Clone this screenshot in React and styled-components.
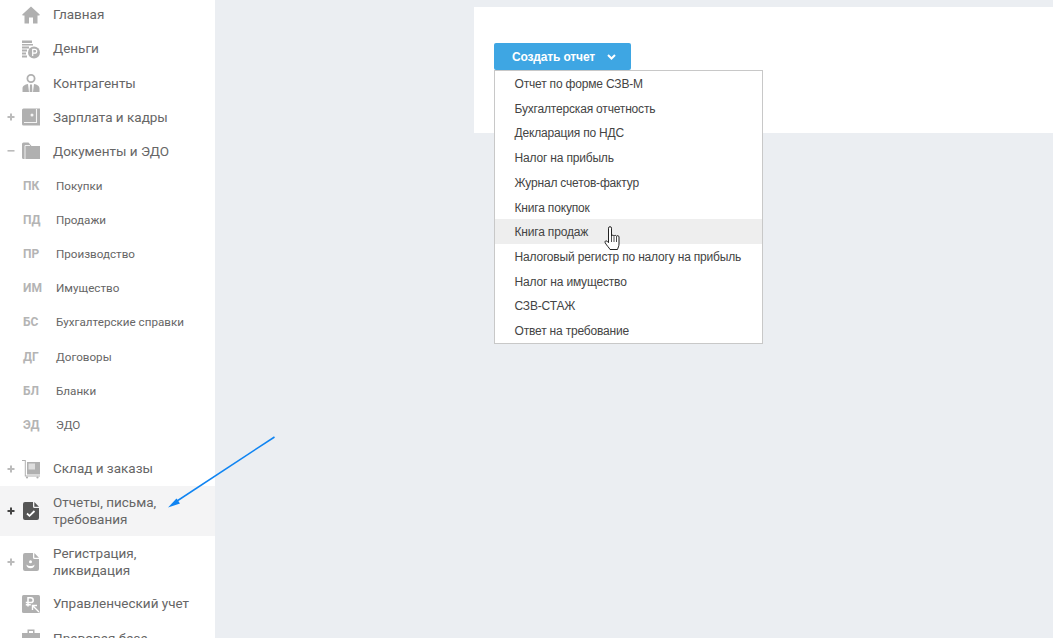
import React from "react";
import styled, { createGlobalStyle } from "styled-components";

const GlobalStyle = createGlobalStyle`
  html, body {
    margin: 0;
    height: 100%;
    overflow: hidden;
    background: #ebeef2;
  }
  #root {
    height: 100%;
  }
`;

const Page = styled.div`
  display: flex;
  position: relative;
  height: 638px;
  overflow: hidden;
  background: #ebeef2;
`;
const Sidebar = styled.nav`
  flex: 0 0 215px;
  background: #fff;
  overflow: hidden;
`;
const MenuList = styled.div`
  margin-top: -2.4px;
`;
const Row = styled.div`
  display: flex;
  align-items: center;
  height: ${(props) => (props.$tall ? "50.5px" : "34.2px")};
  background: ${(props) => (props.$active ? "#f4f4f5" : "transparent")};
  font-family: Roboto, "Liberation Sans", sans-serif;
  font-size: 13.5px;
  line-height: 17px;
  color: #666;
`;
const Toggle = styled.span`
  flex: 0 0 22px;
  padding-left: 7px;
  box-sizing: border-box;
  display: flex;
  color: ${(props) => (props.$active ? "#444" : "#bbb")};
`;
const IconBox = styled.span`
  flex: 0 0 18px;
  height: 18px;
  margin-right: 13px;
  display: flex;
  justify-content: center;
  color: ${(props) => (props.$active ? "#555" : "#b0b0b0")};
`;
const Label = styled.span`
  max-width: ${(props) => (props.$wrap ? "125px" : "none")};
`;
const SubList = styled.div`
  padding-bottom: 9.6px;
`;
const SubRow = styled.div`
  display: flex;
  align-items: center;
  height: 34.2px;
  padding-left: 23px;
  font-family: Roboto, "Liberation Sans", sans-serif;
  font-size: 11.65px;
  color: #666;
`;
const SubCode = styled.span`
  flex: 0 0 33px;
  font-size: 12px;
  font-weight: 700;
  color: #b4b4b4;
`;
const Content = styled.main`
  flex: 1;
  padding: 7px 0 0 259px;
`;
const Card = styled.section`
  height: 126px;
  box-sizing: border-box;
  padding: 36px 20px;
  background: #fff;
`;
const Dropdown = styled.div`
  position: relative;
  width: 137px;
`;
const CreateButton = styled.button`
  display: flex;
  align-items: center;
  width: 137px;
  height: 27px;
  padding: 0 0 0 18px;
  border: 0;
  border-radius: 2px;
  background: #3ea6e3;
  color: #fff;
  font-family: "Liberation Sans", Arial, sans-serif;
  font-size: 12px;
  font-weight: 700;
  letter-spacing: -0.15px;
`;
const ButtonChevron = styled.span`
  display: flex;
  margin-left: 12px;
`;
const Menu = styled.ul`
  position: absolute;
  top: 27px;
  left: 0;
  width: 269px;
  box-sizing: border-box;
  margin: 0;
  padding: 0;
  list-style: none;
  background: #fff;
  border: 1px solid #c8c8c8;
`;
const MenuItem = styled.li`
  height: 24.72px;
  line-height: 26.4px;
  padding-left: 19.5px;
  font-family: "Liberation Sans", Arial, sans-serif;
  font-size: 12px;
  letter-spacing: -0.18px;
  color: #444;
  white-space: nowrap;
  background: ${(props) => (props.$hover ? "#eeeeee" : "transparent")};
`;
const Overlay = styled.svg`
  position: absolute;
  pointer-events: none;
`;
const Arrow = styled(Overlay)`
  left: 160px;
  top: 430px;
`;
const HandCursor = styled(Overlay)`
  left: 604px;
  top: 226px;
`;

const HomeIcon = () => (
  <svg width="18" height="18" viewBox="0 0 18 18" fill="currentColor">
    <path d="M9 0.500 L0.300 8.500 Q0 9.500 1 9.500 L2.500 9.500 L2.500 17.500 L7 17.500 L7 11.500 L11 11.500 L11 17.500 L15.500 17.500 L15.500 9.500 L17 9.500 Q18 9.500 17.700 8.500 Z" />
  </svg>
);
const MoneyIcon = () => (
  <svg width="18" height="19" viewBox="0 0 18 19" fill="currentColor">
    <path d="M0 0.500h10v2.500H0zM0 4h11v1.500H0zM0 6.500h7v2H0zM0 9.500h5v2H0zM0 12.500h4v2H0zM0 15.500h5v2H0z" />
    <circle cx="12" cy="12.500" r="6" />
    <path d="M10.700 16V9.300h2.100a1.900 1.900 0 0 1 0 3.900h-2.100" fill="none" stroke="#fff" strokeWidth="1.200" />
  </svg>
);
const PersonIcon = () => (
  <svg width="18" height="18" viewBox="0 0 18 18" fill="currentColor">
    <path d="M9 0a4.500 4.500 0 1 1 0 9 4.500 4.500 0 0 1 0-9zm0 1.800a2.700 2.700 0 1 0 0 5.400 2.700 2.700 0 0 0 0-5.400z" />
    <path d="M0.500 18v-3.500c0-2.500 2.500-4 5.500-4.400L7 18zM17.500 18v-3.500c0-2.500-2.500-4-5.500-4.400L11 18zM8 10.500h2l.4 7.500H7.600z" />
  </svg>
);
const WalletIcon = () => (
  <svg width="18" height="18" viewBox="0 0 18 18" fill="currentColor">
    <path d="M1.500 0.500H18v17H1.500A1.500 1.500 0 0 1 0 16V2A1.500 1.500 0 0 1 1.500 0.500z" />
    <path d="M14.500 1V14.500H2" fill="none" stroke="#f4f4f4" strokeWidth="1.100" />
    <circle cx="10" cy="7" r="1.500" fill="#f4f4f4" />
  </svg>
);
const FolderIcon = () => (
  <svg width="18" height="18" viewBox="0 0 18 18" fill="currentColor">
    <path d="M1.500 0.500h5l3 3.500H18v13H1.500A1.500 1.500 0 0 1 0 15.500V2A1.500 1.500 0 0 1 1.500 0.500z" />
    <path d="M3 17V3.500h5" fill="none" stroke="#f0f0f0" strokeWidth="1" />
  </svg>
);
const StoreIcon = () => (
  <svg width="18" height="19" viewBox="0 0 18 19" fill="currentColor">
    <path d="M0 0h3.800V15.500H18v1H2.800V1H0z" />
    <path d="M5 2h13v12.500H5z" />
    <path d="M6.500 3.500h6.500v6H6.500z" fill="#dedede" />
    <circle cx="5" cy="17.500" r="1.100" />
    <circle cx="15.500" cy="17.500" r="1.100" />
  </svg>
);
const DocCheckIcon = () => (
  <svg width="16" height="18" viewBox="0 0 16 18" fill="currentColor">
    <path d="M2 0h8v4.500a1.500 1.500 0 0 0 1.500 1.500H16V16a2 2 0 0 1-2 2H2a2 2 0 0 1-2-2V2a2 2 0 0 1 2-2z" />
    <path d="M11.300 0L16 4.700H11.300z" />
    <path d="M4 11.500l2.500 2.300L11.500 9" fill="none" stroke="#fff" strokeWidth="1.800" />
  </svg>
);
const DocPersonIcon = () => (
  <svg width="16" height="18" viewBox="0 0 16 18" fill="currentColor">
    <path d="M2 0h8v4.500a1.500 1.500 0 0 0 1.500 1.500H16V16a2 2 0 0 1-2 2H2a2 2 0 0 1-2-2V2a2 2 0 0 1 2-2z" />
    <path d="M11.300 0L16 4.700H11.300z" />
    <circle cx="7.500" cy="8.800" r="1.500" fill="#fff" />
    <path d="M3.500 11.500c0 2.500 1.500 3.700 4 3.700s4-1.200 4-3.700c-1 1.200-2.500 1.500-4 1.500s-3-.3-4-1.500z" fill="#fff" />
  </svg>
);
const RubleIcon = () => (
  <svg width="18" height="18" viewBox="0 0 18 18" fill="currentColor">
    <rect width="18" height="18" rx="1.500" />
    <path d="M6 11.500V2.800h2.800a2.400 2.400 0 0 1 0 4.800H3.800M3.800 9.700h5" fill="none" stroke="#fff" strokeWidth="1.500" />
    <path d="M17 17l-6-6M10.500 15V10.500H15" fill="none" stroke="#fff" strokeWidth="1.400" />
  </svg>
);
const CaseIcon = () => (
  <svg width="18" height="18" viewBox="0 0 18 18" fill="currentColor">
    <path d="M5.500 0.500h7v3.500h-1.500V2H7v2H5.500z" />
    <path d="M0 4h18v5H0zM0 10h18v7H0z" />
  </svg>
);
const Plus = () => (
  <svg width="8" height="8" viewBox="0 0 8 8" fill="currentColor">
    <path d="M3 0.500h2V3h2.500v2H5v2.500H3V5H0.500V3H3z" />
  </svg>
);
const Minus = () => (
  <svg width="8" height="8" viewBox="0 0 8 8" fill="currentColor">
    <path d="M0.500 3h7v1.600h-7z" />
  </svg>
);
const Chevron = () => (
  <svg width="9" height="6" viewBox="0 0 9 6" fill="none" stroke="#fff" strokeWidth="2">
    <path d="M1 1l3.500 3.500L8 1" />
  </svg>
);

const topItems = [
  { label: "Главная", Icon: HomeIcon },
  { label: "Деньги", Icon: MoneyIcon },
  { label: "Контрагенты", Icon: PersonIcon },
  { label: "Зарплата и кадры", Icon: WalletIcon, toggle: "plus" },
  { label: "Документы и ЭДО", Icon: FolderIcon, toggle: "minus" },
];
const subItems = [
  ["ПК", "Покупки"],
  ["ПД", "Продажи"],
  ["ПР", "Производство"],
  ["ИМ", "Имущество"],
  ["БС", "Бухгалтерские справки"],
  ["ДГ", "Договоры"],
  ["БЛ", "Бланки"],
  ["ЭД", "ЭДО"],
];
const bottomItems = [
  { label: "Склад и заказы", Icon: StoreIcon, toggle: "plus" },
  { label: "Отчеты, письма, требования", Icon: DocCheckIcon, toggle: "plus", tall: true, active: true },
  { label: "Регистрация, ликвидация", Icon: DocPersonIcon, toggle: "plus", tall: true },
  { label: "Управленческий учет", Icon: RubleIcon },
  { label: "Правовая база", Icon: CaseIcon },
];
const reports = [
  "Отчет по форме СЗВ-М",
  "Бухгалтерская отчетность",
  "Декларация по НДС",
  "Налог на прибыль",
  "Журнал счетов-фактур",
  "Книга покупок",
  "Книга продаж",
  "Налоговый регистр по налогу на прибыль",
  "Налог на имущество",
  "СЗВ-СТАЖ",
  "Ответ на требование",
];

function MenuRow({ item }) {
  const { label, Icon, toggle, tall, active } = item;
  return (
    <Row $tall={tall} $active={active}>
      <Toggle $active={active}>
        {toggle === "plus" && <Plus />}
        {toggle === "minus" && <Minus />}
      </Toggle>
      <IconBox $active={active}>
        <Icon />
      </IconBox>
      <Label $wrap={tall}>{label}</Label>
    </Row>
  );
}

export default function App() {
  return (
    <Page>
      <GlobalStyle />
      <Sidebar>
        <MenuList>
          {topItems.map((item) => (
            <MenuRow key={item.label} item={item} />
          ))}
          <SubList>
            {subItems.map(([code, label]) => (
              <SubRow key={code}>
                <SubCode>{code}</SubCode>
                {label}
              </SubRow>
            ))}
          </SubList>
          {bottomItems.map((item) => (
            <MenuRow key={item.label} item={item} />
          ))}
        </MenuList>
      </Sidebar>
      <Content>
        <Card>
          <Dropdown>
            <CreateButton>
              Создать отчет
              <ButtonChevron>
                <Chevron />
              </ButtonChevron>
            </CreateButton>
            <Menu>
              {reports.map((report) => (
                <MenuItem key={report} $hover={report === "Книга продаж"}>
                  {report}
                </MenuItem>
              ))}
            </Menu>
          </Dropdown>
        </Card>
      </Content>
      <Arrow width="120" height="85" viewBox="0 0 120 85">
        <path d="M114.500 7L14 73" stroke="#0f84f2" strokeWidth="1.500" fill="none" />
        <path d="M8 77.500L16.500 68.500L20 73.500Z" fill="#0f84f2" />
      </Arrow>
      <HandCursor width="18" height="25" viewBox="0 0 18 25">
        <path
          d="M4.500 2.200a1.500 1.500 0 0 1 3 0V10a1.300 1.300 0 0 1 2.500 0.200a1.300 1.300 0 0 1 2.500 0.300a1.300 1.300 0 0 1 2.500 0.500v7c0 2.300-1 3.500-1.500 5.500H6C5 21.500 3 20 1.200 16.800c-.8-1.400.7-2.600 1.800-1.600l1.500 1.500z"
          fill="#fff"
          stroke="#222"
          strokeWidth="1"
        />
        <path d="M7.500 10v6M10 10.500v5.500M12.500 11v5" stroke="#222" strokeWidth="0.800" fill="none" />
      </HandCursor>
    </Page>
  );
}
